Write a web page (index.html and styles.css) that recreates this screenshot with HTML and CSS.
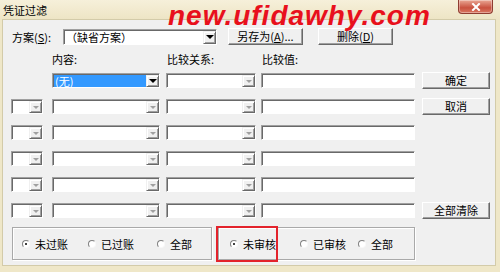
FILE: index.html
```html
<!DOCTYPE html>
<html>
	<head>
		<meta charset="utf-8" />
		<title>凭证过滤</title>
		<link rel="stylesheet" href="styles.css">
	</head>
	<body>
		<div class="win">
			<div class="titlebar">
				<span class="title">凭证过滤</span>
				<span class="close">
					<svg width="10" height="8" viewBox="0 0 10 8"><path d="M2 1L8 7M8 1L2 7" stroke="#fff" stroke-width="2" stroke-linecap="square"/></svg>
				</span>
			</div>
			<div class="client">
				<div class="plan">
					<span class="plan-label">方案(<u>S</u>):</span>
					<div class="combo plan-combo"><span class="combo-text">（缺省方案）</span><span class="drop on"><i></i></span></div>
					<button class="btn btn-save">另存为(<u>A</u>)...</button>
					<button class="btn btn-del">删除(<u>D</u>)</button>
				</div>
				<div class="heads">
					<span class="h-field">内容:</span>
					<span class="h-rel">比较关系:</span>
					<span class="h-val">比较值:</span>
				</div>
				<div class="rows">
					<div class="row">
						<span class="c-op"></span>
						<div class="combo c-field"><span class="combo-text sel">(无)</span><span class="drop on"><i></i></span></div>
						<div class="combo c-rel"><span class="combo-text"></span><span class="drop"><i></i></span></div>
						<div class="edit c-val"></div>
						<button class="btn c-btn">确定</button>
					</div>
					<div class="row">
						<div class="combo c-op"><span class="combo-text"></span><span class="drop"><i></i></span></div>
						<div class="combo c-field"><span class="combo-text"></span><span class="drop"><i></i></span></div>
						<div class="combo c-rel"><span class="combo-text"></span><span class="drop"><i></i></span></div>
						<div class="edit c-val"></div>
						<button class="btn c-btn">取消</button>
					</div>
					<div class="row">
						<div class="combo c-op"><span class="combo-text"></span><span class="drop"><i></i></span></div>
						<div class="combo c-field"><span class="combo-text"></span><span class="drop"><i></i></span></div>
						<div class="combo c-rel"><span class="combo-text"></span><span class="drop"><i></i></span></div>
						<div class="edit c-val"></div>
					</div>
					<div class="row">
						<div class="combo c-op"><span class="combo-text"></span><span class="drop"><i></i></span></div>
						<div class="combo c-field"><span class="combo-text"></span><span class="drop"><i></i></span></div>
						<div class="combo c-rel"><span class="combo-text"></span><span class="drop"><i></i></span></div>
						<div class="edit c-val"></div>
					</div>
					<div class="row">
						<div class="combo c-op"><span class="combo-text"></span><span class="drop"><i></i></span></div>
						<div class="combo c-field"><span class="combo-text"></span><span class="drop"><i></i></span></div>
						<div class="combo c-rel"><span class="combo-text"></span><span class="drop"><i></i></span></div>
						<div class="edit c-val"></div>
					</div>
					<div class="row">
						<div class="combo c-op"><span class="combo-text"></span><span class="drop"><i></i></span></div>
						<div class="combo c-field"><span class="combo-text"></span><span class="drop"><i></i></span></div>
						<div class="combo c-rel"><span class="combo-text"></span><span class="drop"><i></i></span></div>
						<div class="edit c-val"></div>
						<button class="btn c-btn">全部清除</button>
					</div>
				</div>
				<div class="groups">
					<div class="group g-post">
						<label class="radio on w66"><i></i>未过账</label>
						<label class="radio w69"><i></i>已过账</label>
						<label class="radio"><i></i>全部</label>
					</div>
					<div class="group g-audit">
						<label class="radio on w70"><i></i>未审核</label>
						<label class="radio w58"><i></i>已审核</label>
						<label class="radio"><i></i>全部</label>
						<span class="mark"></span>
					</div>
				</div>
			</div>
			<div class="wm">new.ufidawhy.com</div>
		</div>
	</body>
</html>
```
FILE: styles.css
```css
*{
	margin:0px;
	padding:0px;
	box-sizing:border-box;
}
body{
	width:500px;
	height:272px;
	overflow:hidden;
	font:11px/14px "Noto Sans CJK SC", sans-serif;
	color:#000;
}
.win{
	position:relative;
	width:500px;
	height:272px;
	background:#efe7c8;
}
.titlebar{
	display:flex;
	align-items:flex-start;
	height:20px;
	background:linear-gradient(#f6f0da,#ede4c4);
}
.title{
	padding:3px 0 0 3px;
}
.close{
	display:flex;
	align-items:center;
	justify-content:center;
	width:35px;
	height:14px;
	margin-left:auto;
	margin-right:7px;
	border:1px solid #8f3d31;
	border-top:none;
	border-radius:0 0 4px 4px;
	background:linear-gradient(#eaa895,#c9513f 60%,#d97862);
	box-shadow:inset 0 0 0 1px rgba(255,255,255,.35);
}
.client{
	height:245px;
	margin:0 5px 0 3px;
	padding:8px 0 0 8px;
	background:#f0f0f0;
	box-shadow:0 0 0 1px #d3cba9;
}

/* 方案 */
.plan{
	display:flex;
	align-items:center;
	height:17px;
}
.plan-label{
	width:52px;
	padding-left:1px;
}
.plan-combo{
	width:154px;
	height:16px !important;
	margin-right:11px;
}
.btn-save{
	width:75px;
	margin-right:15px;
}
.btn-del{
	width:75px;
}

/* 下拉框、文本框、按钮 */
.combo{
	display:flex;
	height:15px;
	background:#fff;
	border:1px solid;
	border-color:#a0a0a0 #fff #fff #a0a0a0;
	box-shadow:inset 1px 1px 0 #696969;
}
.combo-text{
	display:flex;
	align-items:center;
	flex:1;
	margin:1px 0 0 1px;
	padding-left:1px;
	line-height:14px;
	white-space:nowrap;
}
.combo-text.sel{
	background:#3399ff;
	color:#fff;
}
.drop{
	display:flex;
	align-items:center;
	justify-content:center;
	width:13px;
	margin-top:1px;
	background:#f0f0f0;
	border:1px solid;
	border-color:#f0f0f0 #696969 #696969 #f0f0f0;
	box-shadow:inset 1px 1px 0 #fff, inset -1px -1px 0 #a0a0a0;
}
.drop i{
	width:0;
	height:0;
	border-left:3px solid transparent;
	border-right:3px solid transparent;
	border-top:3px solid #a0a0a0;
}
.drop.on i{
	border-left-width:4px;
	border-right-width:4px;
	border-top:4px solid #000;
}
.edit{
	height:15px;
	background:#fff;
	border:1px solid;
	border-color:#a0a0a0 #fff #fff #a0a0a0;
	box-shadow:inset 1px 1px 0 #696969;
}
.btn{
	flex:none;
	height:17px;
	font:inherit;
	line-height:13px;
	color:#000;
	background:#f0f0f0;
	border:1px solid;
	border-color:#fff #696969 #696969 #fff;
	box-shadow:inset -1px -1px 0 #a0a0a0;
}

/* 条件行 */
.heads{
	display:flex;
	height:14px;
	margin-top:7px;
}
.h-field{
	width:114px;
	margin-left:41px;
}
.h-rel{
	width:95px;
	padding-left:1px;
}
.h-val{
	padding-left:1px;
}
.rows{
	display:flex;
	flex-direction:column;
	gap:11px;
	margin:7px 0 9px;
}
.row{
	display:flex;
	align-items:center;
	height:15px;
}
.c-op{
	flex:none;
	width:32px;
	margin-right:9px;
}
.c-field{
	width:108px;
	margin-right:6px;
}
.c-rel{
	width:90px;
	margin-right:5px;
}
.c-val{
	width:154px;
	margin-right:7px;
}
.c-btn{
	width:68px;
}

/* 过账、审核 */
.groups{
	display:flex;
	margin-left:1px;
}
.group{
	position:relative;
	display:flex;
	align-items:center;
	height:33px;
	border:1px solid #a9a9a9;
	box-shadow:1px 1px 0 #fff, inset 1px 1px 0 #fff;
}
.g-post{
	width:200px;
	margin-right:6px;
	padding-left:9px;
}
.g-audit{
	width:197px;
	padding-left:11px;
}
.radio{
	display:flex;
	align-items:center;
}
.radio i{
	position:relative;
	width:8px;
	height:8px;
	margin-right:5px;
	border-radius:50%;
	background:#fff;
	border:1px solid;
	border-color:#808080 #f8f8f8 #f8f8f8 #808080;
}
.radio.on i::after{
	content:"";
	position:absolute;
	left:2px;
	top:2px;
	width:2px;
	height:2px;
	border-radius:50%;
	background:#000;
}
.w66{ width:66px; }
.w69{ width:69px; }
.w70{ width:70px; }
.w58{ width:58px; }
.mark{
	position:absolute;
	left:-3px;
	top:-2px;
	width:62px;
	height:36px;
	border:2px solid #e3232c;
}

/* 水印 */
.wm{
	position:absolute;
	left:168px;
	top:2px;
	font:italic bold 28px/28px "Liberation Sans", sans-serif;
	letter-spacing:1px;
	color:#e8101c;
	white-space:nowrap;
}
```
